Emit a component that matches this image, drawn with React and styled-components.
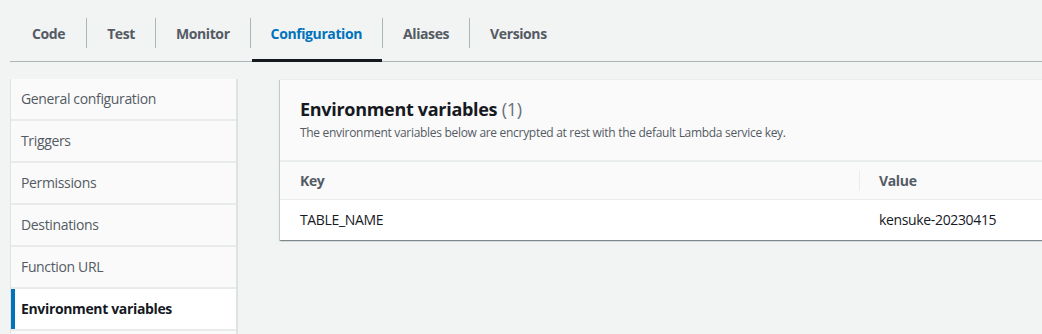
import React from "react";
import styled, { createGlobalStyle } from "styled-components";

const Global = createGlobalStyle`
  html, body { margin: 0; padding: 0; background: #f2f3f3; overflow: hidden; }
  body { font-family: "Open Sans", "Noto Sans", Arial, sans-serif; color: #16191f; }
  * { box-sizing: border-box; }
`;

const Page = styled.div`
  width: 1042px;
  height: 334px;
  padding-left: 10px;
  overflow: hidden;
`;

const TabBar = styled.div`
  display: flex;
  align-items: stretch;
  height: 62px;
  padding-top: 18px;
  border-bottom: 1px solid #aab7b8;
`;

const Tab = styled.div`
  position: relative;
  padding: 7px ${(p) => (p.$first ? "21px" : "20px")} 0 ${(p) => (p.$first ? "21px" : "20px")};
  font-size: 14px;
  line-height: 18px;
  font-weight: 700;
  letter-spacing: -0.4px;
  color: ${(p) => (p.$active ? "#0073bb" : "#545b64")};
  border-left: 1px solid ${(p) => (p.$first ? "transparent" : "#aab7b8")};
  height: 43px;
  &::before {
    content: "";
    position: absolute;
    left: -1px;
    top: 30px;
    bottom: 0;
    width: 1px;
    background: #f2f3f3;
  }
  &::after {
    content: "";
    display: ${(p) => (p.$active ? "block" : "none")};
    position: absolute;
    left: 1px;
    right: 0;
    bottom: -1px;
    height: 3px;
    background: #16191f;
  }
`;

const Body = styled.div`
  display: flex;
  gap: 42px;
  margin-top: 17px;
  align-items: flex-start;
`;

const Side = styled.nav`
  width: 228px;
  flex: none;
  display: flex;
  flex-direction: column;
  gap: 2px;
  background: #e9ebeb;
  border-left: 1px solid #dfe2e2;
  border-right: 2px solid #dfe2e2;
  height: 300px;
`;

const SideItem = styled.div`
  height: 40px;
  flex: none;
  display: flex;
  align-items: center;
  padding-left: ${(p) => (p.$active ? "6px" : "10px")};
  padding-bottom: 1px;
  background: ${(p) => (p.$active ? "#ffffff" : "#fafafa")};
  border-left: ${(p) => (p.$active ? "4px solid #0073bb" : "none")};
  font-size: 14px;
  letter-spacing: -0.35px;
  font-weight: ${(p) => (p.$active ? 700 : 400)};
  color: ${(p) => (p.$active ? "#16191f" : "#545b64")};
`;

const Card = styled.section`
  width: 800px;
  flex: none;
  background: #ffffff;
  border-top: 1px solid #eaeded;
  box-shadow: 0 1px 1px 0 rgba(0, 28, 36, 0.3), 1px 1px 1px 0 rgba(0, 28, 36, 0.15),
    -1px 1px 1px 0 rgba(0, 28, 36, 0.15);
`;

const CardHeader = styled.header`
  background: #fafafa;
  height: 82px;
  padding: 17px 20px 0;
  border-bottom: 2px solid #eaeded;
`;

const Title = styled.h2`
  margin: 0;
  font-size: 18px;
  line-height: 24px;
  font-weight: 700;
  letter-spacing: -0.3px;
  color: #16191f;
`;

const Count = styled.span`
  font-weight: 400;
  color: #687078;
`;

const Desc = styled.p`
  margin: 4px 0 0;
  font-size: 12px;
  line-height: 16px;
  letter-spacing: -0.3px;
  color: #545b64;
`;

const Row = styled.div`
  display: grid;
  grid-template-columns: 579px 1fr;
  height: ${(p) => (p.$head ? "38px" : "40px")};
  align-items: center;
  background: ${(p) => (p.$head ? "#fafafa" : "#ffffff")};
  border-bottom: ${(p) => (p.$head ? "1px solid #eaeded" : "none")};
`;

const Cell = styled.div`
  position: relative;
  padding-left: 20px;
  font-size: 14px;
  line-height: 20px;
  letter-spacing: -0.35px;
  font-weight: ${(p) => (p.$head ? 700 : 400)};
  color: ${(p) => (p.$head ? "#545b64" : "#16191f")};
  ${(p) =>
    p.$divider &&
    `&::before {
      content: "";
      position: absolute;
      left: 0;
      top: 0;
      bottom: 0;
      width: 1px;
      background: #eaeded;
    }`}
`;

const tabs = ["Code", "Test", "Monitor", "Configuration", "Aliases", "Versions"];
const sideItems = [
  "General configuration",
  "Triggers",
  "Permissions",
  "Destinations",
  "Function URL",
  "Environment variables",
  "",
];

export default function App() {
  return (
    <Page>
      <Global />
      <TabBar>
        {tabs.map((t, i) => (
          <Tab key={t} $first={i === 0} $active={t === "Configuration"}>
            {t}
          </Tab>
        ))}
      </TabBar>
      <Body>
        <Side>
          {sideItems.map((s, i) => (
            <SideItem key={i} $active={s === "Environment variables"}>
              {s}
            </SideItem>
          ))}
        </Side>
        <Card>
          <CardHeader>
            <Title>
              Environment variables <Count>(1)</Count>
            </Title>
            <Desc>
              The environment variables below are encrypted at rest with the default Lambda service key.
            </Desc>
          </CardHeader>
          <Row $head>
            <Cell $head>Key</Cell>
            <Cell $head $divider>
              Value
            </Cell>
          </Row>
          <Row>
            <Cell>TABLE_NAME</Cell>
            <Cell>kensuke-20230415</Cell>
          </Row>
        </Card>
      </Body>
    </Page>
  );
}
